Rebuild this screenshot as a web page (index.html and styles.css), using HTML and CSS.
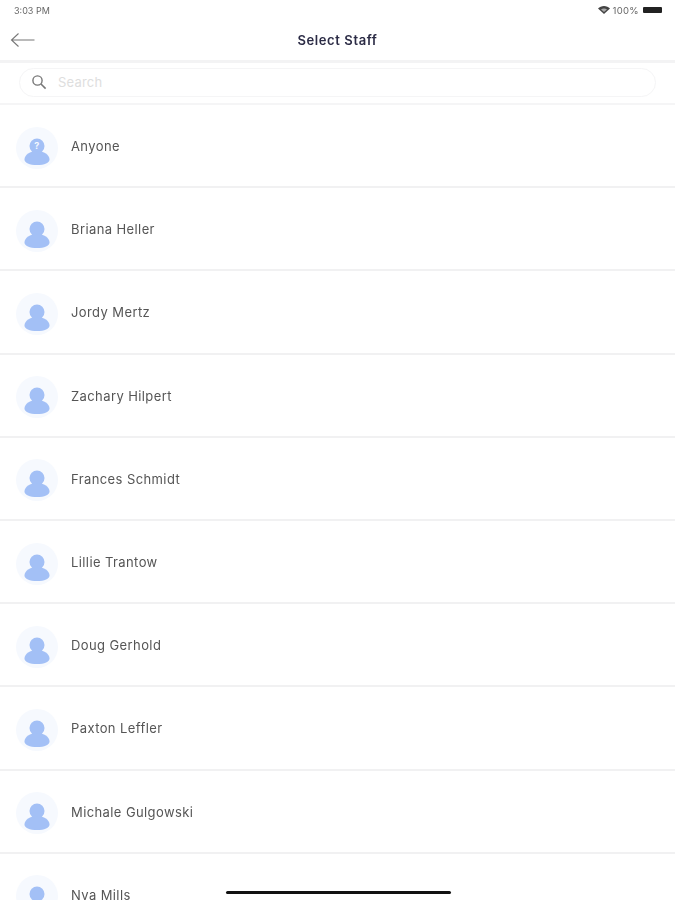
FILE: index.html
```html
<!DOCTYPE html>
<html lang="en">
<head>
    <meta charset="UTF-8">
    <meta name="viewport" content="width=device-width, initial-scale=1.0">
    <title>Select Staff</title>
    <link rel="stylesheet" href="styles.css">
</head>
<body>
    <div class="status-bar">
        <span>3:03 PM</span>
        <div class="status-right">
            <svg class="wifi-icon" width="12" height="8" viewBox="0 0 12 8"><path d="M6 8 0 2.600C1.500 1 3.700 0 6 0s4.500 1 6 2.600z" fill="#444"/><path d="M6 2.400c-1.100 0-2.200.4-3 1L6 6l3-2.600c-.8-.6-1.900-1-3-1z" fill="#aaa"/></svg>
            <span class="battery-text">100%</span>
            <div class="battery"></div>
        </div>
    </div>

    <div class="nav-bar">
        <svg class="back-icon" width="26" height="16" viewBox="0 0 26 16"><path d="M24.500 8H1.500M8.500 1.500 1.500 8l7 6.500" fill="none" stroke="#777" stroke-width="1.100"/></svg>
        <h1>Select Staff</h1>
    </div>

    <div class="search-wrap">
        <div class="search-box">
            <svg width="16" height="16" viewBox="0 0 16 16"><circle cx="6.500" cy="6.500" r="4.600" fill="none" stroke="#777" stroke-width="1.400"/><path d="m10 10 4.600 4.600" stroke="#777" stroke-width="1.600"/></svg>
            <span>Search</span>
        </div>
    </div>

    <div class="staff-list">
        <div class="staff-row">
            <div class="avatar">
                <svg width="26" height="28" viewBox="0 0 26 28"><circle cx="13" cy="8" r="7.500" fill="#a3c0f6"/><path d="M13 13C6 13 .5 17 .5 21.500.5 25 5.500 27 13 27s12.500-2 12.500-5.500C25.500 17 20 13 13 13z" fill="#a3c0f6"/><text x="13" y="11" class="question">?</text></svg>
            </div>
            <span>Anyone</span>
        </div>
        <div class="staff-row">
            <div class="avatar"><svg width="26" height="28" viewBox="0 0 26 28"><circle cx="13" cy="8" r="7.500" fill="#a3c0f6"/><path d="M13 13C6 13 .5 17 .5 21.500.5 25 5.500 27 13 27s12.500-2 12.500-5.500C25.500 17 20 13 13 13z" fill="#a3c0f6"/></svg></div>
            <span>Briana Heller</span>
        </div>
        <div class="staff-row">
            <div class="avatar"><svg width="26" height="28" viewBox="0 0 26 28"><circle cx="13" cy="8" r="7.500" fill="#a3c0f6"/><path d="M13 13C6 13 .5 17 .5 21.500.5 25 5.500 27 13 27s12.500-2 12.500-5.500C25.500 17 20 13 13 13z" fill="#a3c0f6"/></svg></div>
            <span>Jordy Mertz</span>
        </div>
        <div class="staff-row">
            <div class="avatar"><svg width="26" height="28" viewBox="0 0 26 28"><circle cx="13" cy="8" r="7.500" fill="#a3c0f6"/><path d="M13 13C6 13 .5 17 .5 21.500.5 25 5.500 27 13 27s12.500-2 12.500-5.500C25.500 17 20 13 13 13z" fill="#a3c0f6"/></svg></div>
            <span>Zachary Hilpert</span>
        </div>
        <div class="staff-row">
            <div class="avatar"><svg width="26" height="28" viewBox="0 0 26 28"><circle cx="13" cy="8" r="7.500" fill="#a3c0f6"/><path d="M13 13C6 13 .5 17 .5 21.500.5 25 5.500 27 13 27s12.500-2 12.500-5.500C25.500 17 20 13 13 13z" fill="#a3c0f6"/></svg></div>
            <span>Frances Schmidt</span>
        </div>
        <div class="staff-row">
            <div class="avatar"><svg width="26" height="28" viewBox="0 0 26 28"><circle cx="13" cy="8" r="7.500" fill="#a3c0f6"/><path d="M13 13C6 13 .5 17 .5 21.500.5 25 5.500 27 13 27s12.500-2 12.500-5.500C25.500 17 20 13 13 13z" fill="#a3c0f6"/></svg></div>
            <span>Lillie Trantow</span>
        </div>
        <div class="staff-row">
            <div class="avatar"><svg width="26" height="28" viewBox="0 0 26 28"><circle cx="13" cy="8" r="7.500" fill="#a3c0f6"/><path d="M13 13C6 13 .5 17 .5 21.500.5 25 5.500 27 13 27s12.500-2 12.500-5.500C25.500 17 20 13 13 13z" fill="#a3c0f6"/></svg></div>
            <span>Doug Gerhold</span>
        </div>
        <div class="staff-row">
            <div class="avatar"><svg width="26" height="28" viewBox="0 0 26 28"><circle cx="13" cy="8" r="7.500" fill="#a3c0f6"/><path d="M13 13C6 13 .5 17 .5 21.500.5 25 5.500 27 13 27s12.500-2 12.500-5.500C25.500 17 20 13 13 13z" fill="#a3c0f6"/></svg></div>
            <span>Paxton Leffler</span>
        </div>
        <div class="staff-row">
            <div class="avatar"><svg width="26" height="28" viewBox="0 0 26 28"><circle cx="13" cy="8" r="7.500" fill="#a3c0f6"/><path d="M13 13C6 13 .5 17 .5 21.500.5 25 5.500 27 13 27s12.500-2 12.500-5.500C25.500 17 20 13 13 13z" fill="#a3c0f6"/></svg></div>
            <span>Michale Gulgowski</span>
        </div>
        <div class="staff-row">
            <div class="avatar"><svg width="26" height="28" viewBox="0 0 26 28"><circle cx="13" cy="8" r="7.500" fill="#a3c0f6"/><path d="M13 13C6 13 .5 17 .5 21.500.5 25 5.500 27 13 27s12.500-2 12.500-5.500C25.500 17 20 13 13 13z" fill="#a3c0f6"/></svg></div>
            <span>Nya Mills</span>
        </div>
    </div>

    <div class="home-indicator"></div>
</body>
</html>
```

FILE: styles.css
```css
html, body {
    height: 100%;
}

body {
    margin: 0;
    overflow: hidden;
    background: white;
    font-family: Inter, "Open Sans", sans-serif;
    color: #555;
}

.status-bar {
    height: 20px;
    padding: 0 13px 0 14px;
    display: flex;
    justify-content: space-between;
    align-items: center;
    font-size: 9px;
    color: #666;
    filter: blur(0.3px);
}

.status-right {
    display: flex;
    align-items: center;
    gap: 3px;
}

.battery-text {
    font-size: 9.5px;
    letter-spacing: 0.3px;
}

.battery {
    width: 19px;
    height: 6px;
    margin-left: 1px;
    border-radius: 1px;
    background: #222;
}

.nav-bar {
    height: 40px;
    position: relative;
    display: flex;
    align-items: center;
    justify-content: center;
    border-bottom: 3px solid #f3f3f4;
}

.back-icon {
    position: absolute;
    left: 10px;
    top: 12px;
}

.nav-bar h1 {
    margin: 0;
    font-size: 13px;
    font-weight: 600;
    color: #2b2b45;
    letter-spacing: 0.6px;
    filter: blur(0.3px);
}

.search-wrap {
    padding: 5px 19px 6px;
    border-bottom: 2px solid #f5f5f6;
}

.search-box {
    height: 27px;
    padding: 0 11px;
    display: flex;
    align-items: center;
    gap: 11px;
    border: 1px solid #f5f5f6;
    border-radius: 15px;
    font-size: 13px;
    line-height: 25px;
    color: #dedede;
}

.search-box svg {
    margin-top: -2px;
}

.search-box span {
    letter-spacing: 0.2px;
}

.staff-row {
    height: 80.2px;
    padding: 1px 0 0 16px;
    display: flex;
    align-items: center;
    gap: 13px;
    border-bottom: 2px solid #f1f1f2;
    font-size: 13px;
    letter-spacing: 0.4px;
}

.staff-row span {
    filter: blur(0.3px);
}

.avatar {
    width: 42px;
    height: 42px;
    margin-top: 3px;
    display: flex;
    justify-content: center;
    align-items: flex-end;
    box-sizing: border-box;
    padding-bottom: 3px;
    border-radius: 50%;
    background: #f6f9fe;
}

.question {
    font-size: 9px;
    font-weight: 700;
    fill: #f5f8fe;
    text-anchor: middle;
}

.home-indicator {
    position: absolute;
    left: 226px;
    top: 891px;
    width: 225px;
    height: 3px;
    border-radius: 2px;
    background: #111;
}
```
